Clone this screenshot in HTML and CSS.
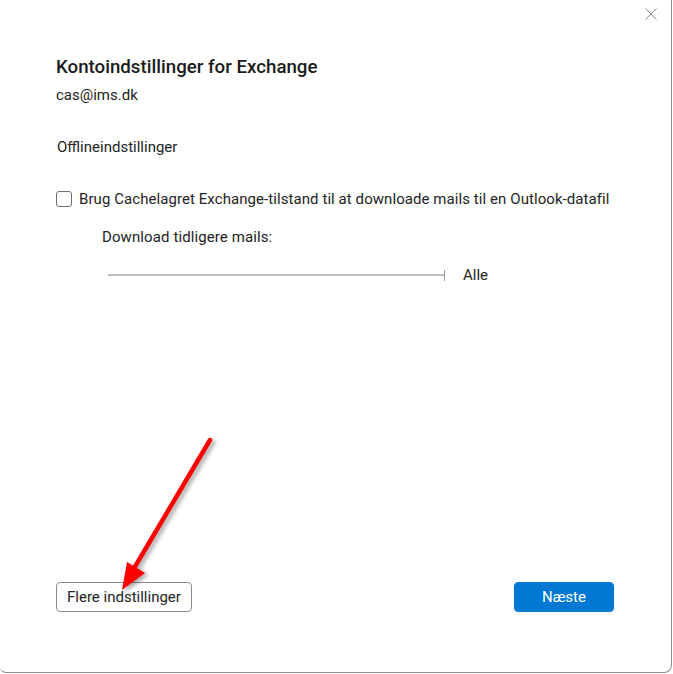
FILE: index.html
```html
<!DOCTYPE html>
<html lang="da">
<head>
  <meta charset="UTF-8">
  <title>Kontoindstillinger for Exchange</title>
  <link rel="stylesheet" href="styles.css">
</head>
<body>
  <div class="dialog">
    <button class="close" aria-label="Luk">
      <svg width="12" height="12" viewBox="0 0 12 12">
        <path d="M0.5 0.5 L11.5 11.5 M11.5 0.5 L0.5 11.5" stroke="#8a8a8a" stroke-width="1" fill="none"/>
      </svg>
    </button>

    <div class="content">
      <h1>Kontoindstillinger for Exchange</h1>
      <p class="account">cas@ims.dk</p>

      <p class="section">Offlineindstillinger</p>

      <label class="check">
        <span class="box"></span>
        Brug Cachelagret Exchange-tilstand til at downloade mails til en Outlook-datafil
      </label>

      <div class="download">
        <p>Download tidligere mails:</p>
        <div class="slider-row">
          <div class="slider">
            <span class="track"></span>
            <span class="tick"></span>
          </div>
          <span class="slider-value">Alle</span>
        </div>
      </div>
    </div>

    <div class="footer">
      <button class="btn">Flere indstillinger</button>
      <button class="btn primary">Næste</button>
    </div>

    <!-- red pointer arrow drawn over the dialog -->
    <svg class="pointer" width="140" height="170" viewBox="0 0 140 170">
      <line x1="110" y1="10" x2="33" y2="140" stroke="#ff0000" stroke-width="4.5" stroke-linecap="round"/>
      <polygon points="22,160 27,132 45,143" fill="#ff0000"/>
    </svg>
  </div>
</body>
</html>
```

FILE: styles.css
```css
body {
  margin: 0;
  padding: 0;
  font-family: 'Roboto', 'Noto Sans', sans-serif;
  background: #ffffff;
  color: #242424;
}

.dialog {
  position: relative;
  box-sizing: border-box;
  width: 672px;
  height: 673px;
  background: #ffffff;
  border-right: 1px solid #8c8c8c;
  border-bottom: 1px solid #8c8c8c;
  border-bottom-right-radius: 8px;
  border-bottom-left-radius: 6px;
  display: flex;
  flex-direction: column;
  padding: 0 0 0 56px;
}

.close {
  position: absolute;
  top: 8px;
  right: 14px;
  width: 12px;
  height: 12px;
  padding: 0;
  border: none;
  background: none;
  display: flex;
}

.content {
  flex: 1;
  padding-top: 55px;
}

.content h1 {
  margin: 0;
  font-size: 18.7px;
  font-weight: 500;
  color: #1b1b1b;
  line-height: 24px;
}

.account {
  margin: 6px 0 0;
  font-size: 15px;
  line-height: 20px;
}

.section {
  margin: 32px 0 0 1px;
  font-size: 15px;
  line-height: 20px;
}

.check {
  display: flex;
  align-items: center;
  gap: 7px;
  margin-top: 32px;
  font-size: 15px;
  letter-spacing: 0.07px;
  line-height: 20px;
}

.box {
  box-sizing: border-box;
  width: 16px;
  height: 16px;
  border: 1px solid #6e6e6e;
  border-radius: 3px;
  background: #ffffff;
}

.download {
  padding-left: 46px;
}

.download p {
  margin: 18px 0 0;
  font-size: 15px;
  letter-spacing: 0.1px;
  line-height: 20px;
}

.slider-row {
  display: flex;
  align-items: center;
  margin-top: 18px;
  gap: 18px;
}

.slider {
  display: flex;
  align-items: center;
  width: 337px;
  margin-left: 6px;
  height: 12px;
}

.track {
  flex: 1;
  height: 2px;
  background: #bdbdbd;
}

.tick {
  width: 1px;
  height: 11px;
  background: #9a9a9a;
}

.slider-value {
  font-size: 15px;
  line-height: 20px;
}

.footer {
  display: flex;
  justify-content: space-between;
  padding: 0 57px 60px 0;
}

.btn {
  box-sizing: border-box;
  height: 30px;
  padding: 0 10px;
  font-family: inherit;
  font-size: 15px;
  color: #242424;
  background: #ffffff;
  border: 1px solid #8a8a8a;
  border-radius: 4px;
}

.btn.primary {
  width: 100px;
  color: #ffffff;
  background: #0078d4;
  border-color: #0078d4;
}

.pointer {
  position: absolute;
  left: 100px;
  top: 430px;
  filter: drop-shadow(3px 2px 2px rgba(0, 0, 0, 0.35));
}
```
